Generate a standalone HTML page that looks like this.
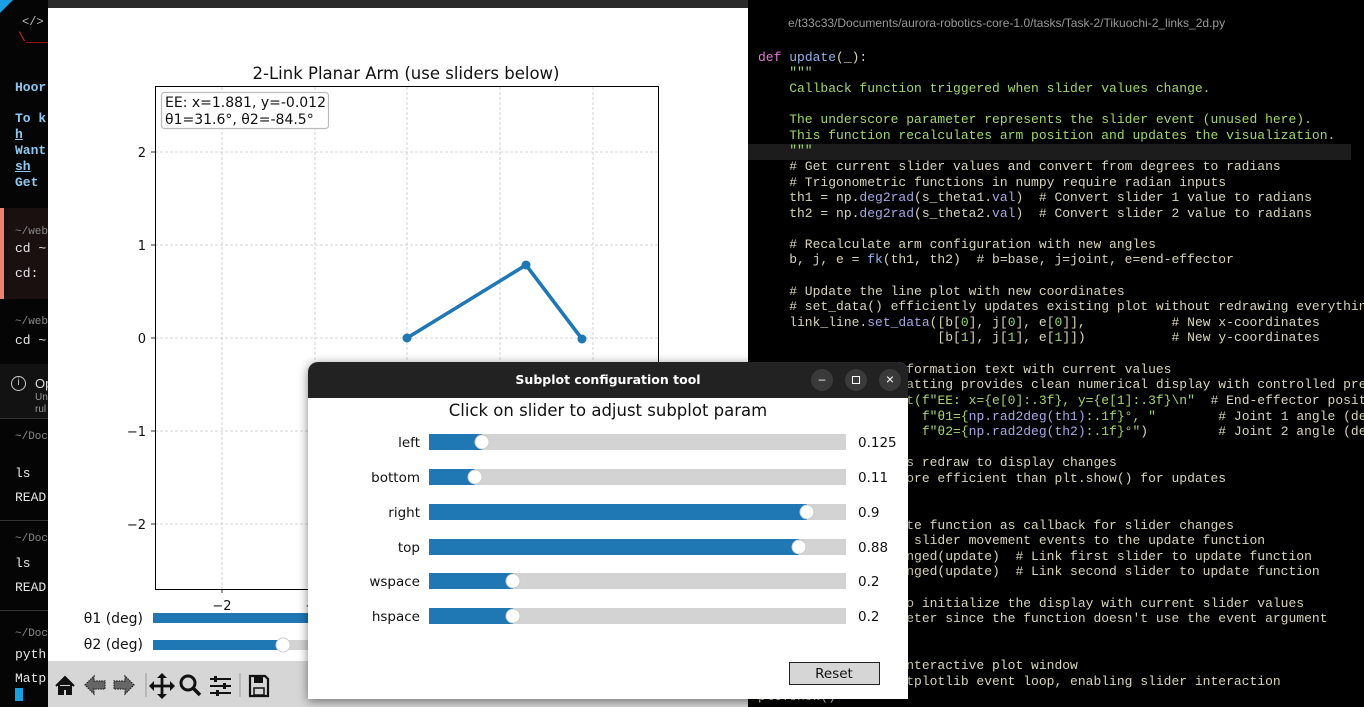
<!DOCTYPE html>
<html><head><meta charset="utf-8">
<style>
*{margin:0;padding:0;box-sizing:border-box}
body{width:1364px;height:707px;background:#000;position:relative;overflow:hidden;font-family:"Liberation Sans","DejaVu Sans",sans-serif}
.abs{position:absolute}
.term{left:0;top:0;width:48px;height:707px;background:#050505;overflow:hidden;font-family:"Liberation Mono","DejaVu Sans Mono",monospace;font-size:13px;color:#e6e6e6;white-space:pre}
.term div{position:absolute;left:15px}
.b{color:#8ec8f0;font-weight:bold}
.u{text-decoration:underline}
.dim{color:#888}
.code{left:748px;top:8px;width:616px;height:699px;background:#000;font-family:"Liberation Mono","DejaVu Sans Mono",monospace;font-size:13px;color:#d8d6b6;white-space:pre;overflow:hidden}
.code .l{position:absolute;left:10px;height:16px;line-height:16px}
.g{color:#9fd86a}.k{color:#e676d8}.f{color:#8fb4f0}.m{color:#a7a6e6}.n{color:#8fd86a}
</style></head><body>

<div class="abs term">
  <div style="left:0;top:0;width:0;height:0;border-top:13px solid #1aa0e0;border-right:13px solid transparent"></div>
  <div style="top:15px;left:22px;color:#bbb;font-size:12px">&lt;/&gt; C</div>
  <div style="top:30px;left:18px;color:#e02020">\___</div>
  <div class="b" style="top:80px">Hoor</div>
  <div class="b" style="top:111px">To k</div>
  <div class="b u" style="top:127px">h</div>
  <div class="b" style="top:143px">Want</div>
  <div class="b u" style="top:159px">sh</div>
  <div class="b" style="top:175px">Get </div>
  <div style="left:0;top:208px;width:48px;height:91px;background:#1a1010"></div>
  <div style="left:0;top:208px;width:4px;height:91px;background:#f08070"></div>
  <div class="dim" style="top:226px;font-size:11px">~/web</div>
  <div style="top:241px">cd ~</div>
  <div style="top:266px">cd:</div>
  <div class="dim" style="top:316px;font-size:11px">~/web</div>
  <div style="top:333px">cd ~</div>
  <div style="left:0;top:364px;width:48px;height:54px;background:#121212"></div>
  <div style="top:376px;left:11px;width:15px;height:15px;border:1.5px solid #ccc;border-radius:50%;font-size:10px;line-height:12px;text-align:center;color:#ccc;font-family:'Liberation Sans'">i</div>
  <div style="top:376px;left:35px;font-family:'Liberation Sans';font-size:13px;color:#ddd">Op</div>
  <div style="top:392px;left:35px;font-family:'Liberation Sans';font-size:10px;color:#999">Un</div>
  <div style="top:404px;left:35px;font-family:'Liberation Sans';font-size:10px;color:#999">rul</div>
  <div style="left:0;top:418px;width:48px;height:1px;background:#333"></div>
  <div class="dim" style="top:431px;font-size:11px">~/Doc</div>
  <div style="top:466px">ls</div>
  <div style="top:490px">READ</div>
  <div style="left:0;top:520px;width:48px;height:1px;background:#333"></div>
  <div class="dim" style="top:533px;font-size:11px">~/Doc</div>
  <div style="top:556px">ls</div>
  <div style="top:580px">READ</div>
  <div style="left:0;top:610px;width:48px;height:1px;background:#333"></div>
  <div class="dim" style="top:628px;font-size:11px">~/Doc</div>
  <div style="top:647px">pyth</div>
  <div style="top:671px">Matp</div>
  <div style="left:15px;top:688px;width:8px;height:13px;background:#1aa0e0"></div>
</div>

<div class="abs" style="left:48px;top:0;width:700px;height:8px;background:#2a2a2a"></div>
<div class="abs" style="left:48px;top:8px;width:700px;height:653px;background:#fff"></div>

<svg class="abs" style="left:48px;top:8px" width="700" height="653">
  <g transform="translate(-48,-8)">
  <text x="406" y="79" font-family="DejaVu Sans" font-size="16.5" text-anchor="middle" fill="#111">2-Link Planar Arm (use sliders below)</text>
  <g stroke="#c8c8c8" stroke-width="0.8" stroke-dasharray="3,2">
    <line x1="222" y1="87" x2="222" y2="589"/><line x1="315" y1="87" x2="315" y2="589"/><line x1="407" y1="87" x2="407" y2="589"/><line x1="500" y1="87" x2="500" y2="589"/><line x1="593" y1="87" x2="593" y2="589"/>
    <line x1="155" y1="152" x2="658" y2="152"/><line x1="155" y1="245" x2="658" y2="245"/><line x1="155" y1="338" x2="658" y2="338"/><line x1="155" y1="431" x2="658" y2="431"/><line x1="155" y1="524" x2="658" y2="524"/>
  </g>
  <rect x="155.5" y="86.5" width="503" height="503" fill="none" stroke="#000" stroke-width="1"/>
  <g stroke="#000" stroke-width="0.8">
    <line x1="151" y1="152" x2="155" y2="152"/><line x1="151" y1="245" x2="155" y2="245"/><line x1="151" y1="338" x2="155" y2="338"/><line x1="151" y1="431" x2="155" y2="431"/><line x1="151" y1="524" x2="155" y2="524"/>
    <line x1="222" y1="589" x2="222" y2="593"/><line x1="315" y1="589" x2="315" y2="593"/>
  </g>
  <g font-family="DejaVu Sans" font-size="13" fill="#111" text-anchor="end">
    <text x="146" y="157">2</text><text x="146" y="250">1</text><text x="146" y="343">0</text><text x="146" y="436">−1</text><text x="146" y="529">−2</text>
  </g>
  <text x="222" y="610" font-family="DejaVu Sans" font-size="13" fill="#111" text-anchor="middle">−2</text>
  <text x="315" y="610" font-family="DejaVu Sans" font-size="13" fill="#111" text-anchor="middle">−1</text>
  <polyline points="407,338 526,265 582,339" fill="none" stroke="#1f77b4" stroke-width="3.6"/>
  <circle cx="407" cy="338" r="4.5" fill="#1f77b4"/><circle cx="526" cy="265" r="4.5" fill="#1f77b4"/><circle cx="582" cy="339" r="4.5" fill="#1f77b4"/>
  <rect x="161.5" y="92.5" width="167" height="36" rx="3" fill="#fff" stroke="#bbb" stroke-width="1.2"/>
  <text x="165" y="107" font-family="DejaVu Sans" font-size="14" fill="#111">EE: x=1.881, y=-0.012</text>
  <text x="165" y="124" font-family="DejaVu Sans" font-size="14" fill="#111">θ1=31.6°, θ2=-84.5°</text>
  <text x="143" y="623" font-family="DejaVu Sans" font-size="14" fill="#111" text-anchor="end">θ1 (deg)</text>
  <text x="143" y="649" font-family="DejaVu Sans" font-size="14" fill="#111" text-anchor="end">θ2 (deg)</text>
  <rect x="153" y="613" width="160" height="10" fill="#1f77b4"/>
  <rect x="153" y="640" width="160" height="10" fill="#d3d3d3"/>
  <rect x="153" y="640" width="130" height="10" fill="#1f77b4"/>
  <circle cx="283" cy="645" r="7" fill="#fff" stroke="#ccc"/>
  </g>
</svg>

<div class="abs" style="left:48px;top:661px;width:700px;height:46px;background:#d6d6d6"></div>
<svg class="abs" style="left:48px;top:661px" width="260" height="46">
  <g transform="translate(-48,-661)">
  <path d="M56 686 L65 677 L74 686 M59 685 V694 H63 V689 H67 V694 H71 V685" fill="#111" stroke="#111" stroke-width="2"/>
  <path d="M85 685 L94 676 V681 H105 V689 H94 V694 Z" fill="#666" stroke="#222" stroke-width="1.2" stroke-dasharray="1.5,1"/>
  <path d="M134 685 L125 676 V681 H114 V689 H125 V694 Z" fill="#666" stroke="#222" stroke-width="1.2" stroke-dasharray="1.5,1"/>
  <line x1="146" y1="673" x2="146" y2="697" stroke="#999"/>
  <path d="M162 675 V697 M151 686 H173" stroke="#111" stroke-width="2.8"/>
  <path d="M162 673 l-5 5 h10z M162 699 l-5 -5 h10z M149 686 l5 -5 v10z M175 686 l-5 -5 v10z" fill="#111"/>
  <circle cx="188" cy="683" r="7" fill="none" stroke="#111" stroke-width="3"/>
  <line x1="193" y1="688" x2="200" y2="695" stroke="#111" stroke-width="3.5"/>
  <path d="M210 679 H231 M210 686 H231 M210 693 H231" stroke="#111" stroke-width="2"/>
  <rect x="214" y="676" width="3" height="6" fill="#111"/><rect x="223" y="683" width="3" height="6" fill="#111"/><rect x="216" y="690" width="3" height="6" fill="#111"/>
  <line x1="240" y1="673" x2="240" y2="697" stroke="#999"/>
  <path d="M250 676 H265 L268 679 V696 H250 Z" fill="none" stroke="#111" stroke-width="2.2"/>
  <rect x="254" y="677" width="9" height="6" fill="#111"/><rect x="254" y="688" width="10" height="7" fill="none" stroke="#111" stroke-width="1.5"/>
  </g>
</svg>

<div class="abs code">
  <div class="l" style="top:7px;left:40px;font-family:'Liberation Sans';font-size:12px;color:#999">e/t33c33/Documents/aurora-robotics-core-1.0/tasks/Task-2/Tikuochi-2_links_2d.py</div>
  <div class="l" style="top:136px;left:0;width:603px;background:#1c1c1c"></div>
  <div class="l" style="top:42px"><span class="k">def</span> <span class="f">update</span>(_):</div>
  <div class="l g" style="top:57px">    """</div>
  <div class="l g" style="top:73px">    Callback function triggered when slider values change.</div>
  <div class="l g" style="top:104px">    The underscore parameter represents the slider event (unused here).</div>
  <div class="l g" style="top:120px">    This function recalculates arm position and updates the visualization.</div>
  <div class="l g" style="top:135px">    """</div>
  <div class="l" style="top:151px">    # Get current slider values and convert from degrees to radians</div>
  <div class="l" style="top:167px">    # Trigonometric functions in numpy require radian inputs</div>
  <div class="l" style="top:182px">    th1 = np.<span class="m">deg2rad</span>(s_theta1.<span class="m">val</span>)  # Convert slider 1 value to radians</div>
  <div class="l" style="top:198px">    th2 = np.<span class="m">deg2rad</span>(s_theta2.<span class="m">val</span>)  # Convert slider 2 value to radians</div>
  <div class="l" style="top:229px">    # Recalculate arm configuration with new angles</div>
  <div class="l" style="top:244px">    b, j, e = <span class="f">fk</span>(th1, th2)  # b=base, j=joint, e=end-effector</div>
  <div class="l" style="top:276px">    # Update the line plot with new coordinates</div>
  <div class="l" style="top:291px">    # set_data() efficiently updates existing plot without redrawing everything</div>
  <div class="l" style="top:307px">    link_line.<span class="m">set_data</span>([b[<span class="n">0</span>], j[<span class="n">0</span>], e[<span class="n">0</span>]],           # New x-coordinates</div>
  <div class="l" style="top:322px">                       [b[<span class="n">1</span>], j[<span class="n">1</span>], e[<span class="n">1</span>]])           # New y-coordinates</div>
  <div class="l" style="top:354px">    # Update the information text with current values</div>
  <div class="l" style="top:369px">    # f-string formatting provides clean numerical display with controlled precision</div>
  <div class="l" style="top:385px">    ee_text.set_tex<span class="g">t(f"EE: x={e[0]:.3f}, y={e[1]:.3f}\n"</span>  # End-effector position</div>
  <div class="l" style="top:401px">                     <span class="g">f"θ1={<span class="m">np.rad2deg(th1)</span>:.1f}°, "</span>        # Joint 1 angle (deg)</div>
  <div class="l" style="top:416px">                     <span class="g">f"θ2={<span class="m">np.rad2deg(th2)</span>:.1f}°"</span>)         # Joint 2 angle (deg)</div>
  <div class="l" style="top:447px">    # Request canvas redraw to display changes</div>
  <div class="l" style="top:463px">    # draw_idle() more efficient than plt.show() for updates</div>
  <div class="l" style="top:510px">    # Register update function as callback for slider changes</div>
  <div class="l" style="top:525px">    # This connects slider movement events to the update function</div>
  <div class="l" style="top:541px">    s_theta1.on_changed(update)  # Link first slider to update function</div>
  <div class="l" style="top:556px">    s_theta2.on_changed(update)  # Link second slider to update function</div>
  <div class="l" style="top:588px">    # Call update to initialize the display with current slider values</div>
  <div class="l" style="top:603px">    # None as parameter since the function doesn't use the event argument</div>
  <div class="l" style="top:650px">    # Display the interactive plot window</div>
  <div class="l" style="top:666px">    # Starts the matplotlib event loop, enabling slider interaction</div>
  <div class="l" style="top:681px">plt.show()</div>
</div>

<div class="abs" style="left:308px;top:362px;width:600px;height:337px;border-radius:10px 10px 0 0;box-shadow:0 2px 10px rgba(0,0,0,.5);background:#fff;overflow:hidden">
  <div style="position:absolute;left:0;top:0;width:600px;height:36px;background:#222"></div>
  <div style="position:absolute;left:0;top:10px;width:600px;text-align:center;color:#fff;font-family:'DejaVu Sans';font-weight:bold;font-size:12.5px">Subplot configuration tool</div>
  <div style="position:absolute;left:503px;top:7px;width:22px;height:22px;border-radius:50%;background:#3a3a3a;color:#fff;text-align:center;font-size:12px;line-height:20px">–</div>
  <div style="position:absolute;left:537px;top:7px;width:22px;height:22px;border-radius:50%;background:#3a3a3a"><div style="position:absolute;left:7px;top:7px;width:8px;height:8px;border:1.3px solid #fff"></div></div>
  <div style="position:absolute;left:571px;top:7px;width:22px;height:22px;border-radius:50%;background:#3a3a3a;color:#fff;text-align:center;font-size:14px;line-height:21px">×</div>
  <div style="position:absolute;left:0;top:39px;width:600px;text-align:center;font-family:'DejaVu Sans';font-size:16.5px;color:#111">Click on slider to adjust subplot param</div>
</div>
<svg class="abs" style="left:308px;top:398px" width="600" height="301">
  <g transform="translate(-308,-398)" font-family="DejaVu Sans" font-size="13.5" fill="#111">
    <g text-anchor="end"><text x="420" y="447">left</text><text x="420" y="482">bottom</text><text x="420" y="517">right</text><text x="420" y="552">top</text><text x="420" y="586">wspace</text><text x="420" y="621">hspace</text></g>
    <text x="858" y="447">0.125</text><text x="858" y="482">0.11</text><text x="858" y="517">0.9</text><text x="858" y="552">0.88</text><text x="858" y="586">0.2</text><text x="858" y="621">0.2</text>
    <g fill="#d3d3d3"><rect x="429" y="434" width="417" height="16"/><rect x="429" y="469" width="417" height="16"/><rect x="429" y="504" width="417" height="16"/><rect x="429" y="539" width="417" height="16"/><rect x="429" y="573" width="417" height="16"/><rect x="429" y="608" width="417" height="16"/></g>
    <g fill="#1f77b4"><rect x="429" y="434" width="53" height="16"/><rect x="429" y="469" width="46" height="16"/><rect x="429" y="504" width="378" height="16"/><rect x="429" y="539" width="370" height="16"/><rect x="429" y="573" width="84" height="16"/><rect x="429" y="608" width="84" height="16"/></g>
    <g fill="#fff" stroke="#ccc"><circle cx="482" cy="442" r="7"/><circle cx="475" cy="477" r="7"/><circle cx="807" cy="512" r="7"/><circle cx="799" cy="547" r="7"/><circle cx="513" cy="581" r="7"/><circle cx="513" cy="616" r="7"/></g>
    <rect x="789.5" y="662.5" width="90" height="22" fill="#d6d6d6" stroke="#222"/>
    <text x="834" y="678" text-anchor="middle">Reset</text>
  </g>
</svg>
</body></html>
